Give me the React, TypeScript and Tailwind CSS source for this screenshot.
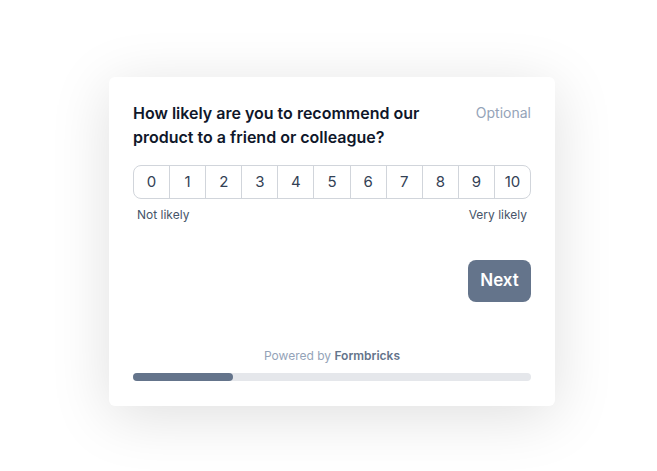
import React from "react";

const scale = [0, 1, 2, 3, 4, 5, 6, 7, 8, 9, 10];

export default function App() {
  return (
    <div
      className="min-h-[471px] w-[657px] bg-white pt-[77px] pl-[109px]"
      style={{ fontFamily: "Inter, 'Noto Sans', sans-serif" }}
    >
      <div className="flex w-[446px] flex-col rounded-md bg-white p-6 pb-[25px] shadow-[0_10px_60px_rgba(0,0,0,0.13)]">
        <div className="flex items-start justify-between gap-4">
          <h2 className="text-[16px] font-semibold leading-6 text-[#0f172a]">
            How likely are you to recommend our
            <br />
            product to a friend or colleague?
          </h2>
          <span className="text-[14px] leading-6 text-[#94a3b8]">Optional</span>
        </div>

        <div className="mt-4 flex h-[34px] overflow-hidden rounded-lg border border-[#d1d5db]">
          {scale.map((n) => (
            <div
              key={n}
              className="flex flex-1 items-center justify-center border-l border-[#d1d5db] text-[15px] text-[#334155] first:border-l-0"
            >
              {n}
            </div>
          ))}
        </div>
        <div className="mt-2 flex justify-between px-1 text-[12px] leading-4 text-[#475569]">
          <span>Not likely</span>
          <span>Very likely</span>
        </div>

        <div className="mt-[37px] flex justify-end">
          <button className="h-[42px] w-[63px] rounded-lg bg-[#64748b] text-[17px] font-semibold text-white">
            Next
          </button>
        </div>

        <p className="mt-[46px] text-center text-[12px] leading-4 text-[#94a3b8]">
          Powered by <span className="font-semibold text-[#64748b]">Formbricks</span>
        </p>
        <div className="mt-[9px] h-2 w-full rounded-full bg-[#e5e7eb]">
          <div className="h-2 w-1/4 rounded-full bg-[#64748b]" />
        </div>
      </div>
    </div>
  );
}
